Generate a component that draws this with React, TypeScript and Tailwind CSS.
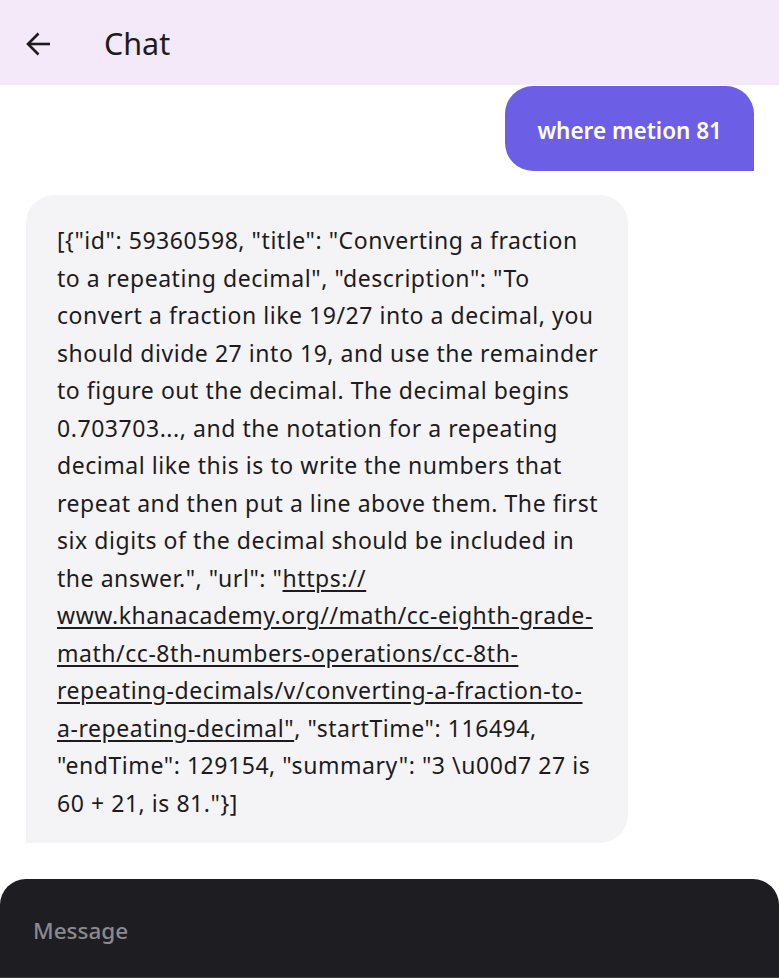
const lines: string[] = [
  '[{"id": 59360598, "title": "Converting a fraction',
  'to a repeating decimal", "description": "To',
  'convert a fraction like 19/27 into a decimal, you',
  'should divide 27 into 19, and use the remainder',
  'to figure out the decimal. The decimal begins',
  '0.703703..., and the notation for a repeating',
  'decimal like this is to write the numbers that',
  'repeat and then put a line above them. The first',
  'six digits of the decimal should be included in',
];

export default function App() {
  return (
    <div className="flex h-[978px] w-full flex-col bg-white font-['Noto_Sans',sans-serif] text-[#1d1b20]">
      {/* Header */}
      <header className="flex h-[85px] shrink-0 items-center bg-[#f3e9f9] pl-[25px] pt-[3px]">
        <svg width="26" height="26" viewBox="0 0 26 26" fill="none" stroke="#1d1b20" strokeWidth="2.6">
          <path d="M25 13H3" />
          <path d="M13.5 2.5L3 13l10.5 10.5" />
        </svg>
        <h1 className="ml-[53px] text-[30.5px] font-normal">Chat</h1>
      </header>

      {/* Messages */}
      <div className="flex flex-1 flex-col">
        <div className="flex justify-end pr-[25px] pt-[1px]">
          <div className="flex h-[85px] items-center rounded-[28px] rounded-br-none bg-[#6c5fe6] px-[32px] pt-[4px] text-[22.5px] font-semibold text-white">
            where metion 81
          </div>
        </div>

        <div className="mt-[24px] flex pl-[26px]">
          <div className="w-[602px] rounded-[28px] rounded-bl-none bg-[#f4f4f6] px-[31px] pb-[21px] pt-[27px] text-[23px] leading-[37.5px] tracking-[0.55px] whitespace-nowrap">
            {lines.map((l, i) => (
              <div key={i}>{l}</div>
            ))}
            <div>
              the answer.", "url": "<a href="#" className="underline underline-offset-[3px]">https://</a>
            </div>
            <div>
              <a href="#" className="underline underline-offset-[3px]">www.khanacademy.org//math/cc-eighth-grade-</a>
            </div>
            <div>
              <a href="#" className="underline underline-offset-[3px]">math/cc-8th-numbers-operations/cc-8th-</a>
            </div>
            <div>
              <a href="#" className="underline underline-offset-[3px]">repeating-decimals/v/converting-a-fraction-to-</a>
            </div>
            <div>
              <a href="#" className="underline underline-offset-[3px]">a-repeating-decimal"</a>, "startTime": 116494,
            </div>
            <div>"endTime": 129154, "summary": "3 {'\\u00d7'} 27 is</div>
            <div>60 + 21, is 81."{'}'}]</div>
          </div>
        </div>
      </div>

      {/* Input */}
      <div className="flex h-[99px] shrink-0 items-center rounded-t-[26px] border-b border-[#3a3940] bg-[#1e1d22] px-[33px] pt-[6px]">
        <span className="text-[22.5px] font-medium text-[#8a8a8f]">Message</span>
      </div>
    </div>
  );
}
